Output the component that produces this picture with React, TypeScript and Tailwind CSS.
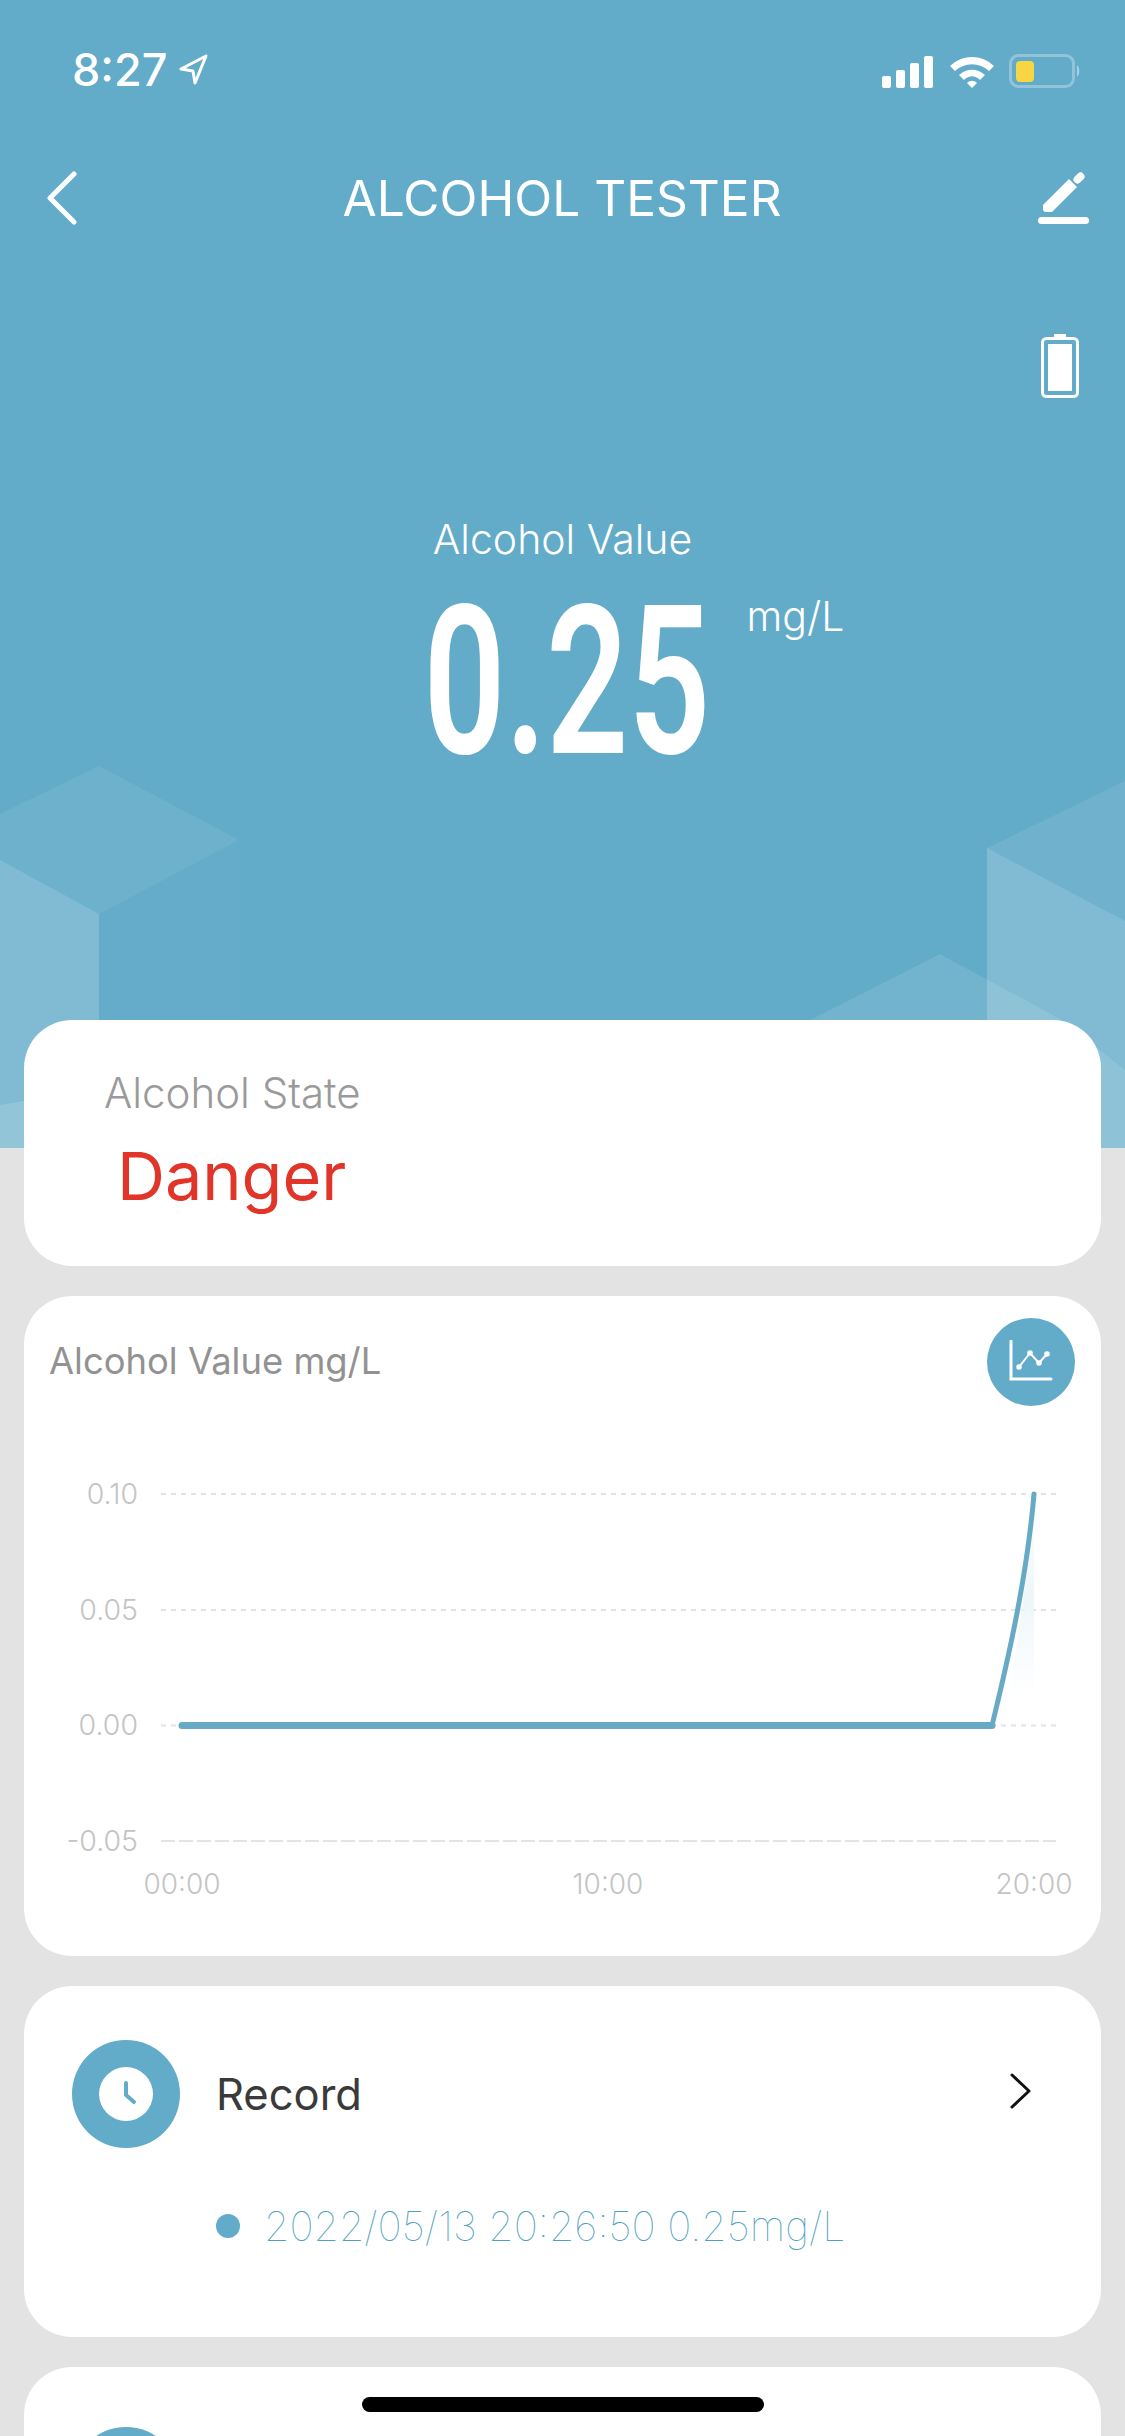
export default function App() {
  return (
    <div className="relative h-[2436px] w-[1125px] overflow-hidden bg-[#e3e3e3] font-['Inter','Noto_Sans',sans-serif]">
      <header className="relative h-[1148px] overflow-hidden bg-[#62abc9] text-white">
        <svg className="absolute inset-0" width="1125" height="1148" viewBox="0 0 1125 1148">
          <polygon points="0,814 99,766 239,840 99,914 0,860" fill="#fff" opacity="0.08" />
          <polygon points="0,860 99,914 99,1148 0,1148" fill="#fff" opacity="0.2" />
          <polygon points="99,914 239,840 239,1148 99,1148" fill="#fff" opacity="0.02" />
          <polygon points="1125,781 987,848 1125,921" fill="#fff" opacity="0.09" />
          <polygon points="987,848 1125,921 1125,1148 987,1148" fill="#fff" opacity="0.2" />
          <polygon points="810,1020 940,954 1062,1020 1125,1070 1125,1148 700,1148" fill="#fff" opacity="0.1" />
          <polygon points="0,1105 60,1095 60,1148 0,1148" fill="#fff" opacity="0.15" />
        </svg>

        <div className="relative flex h-[148px] items-end justify-between pr-[42px] pb-[58px] pl-[72px]">
          <div className="flex items-center gap-[11px] text-[45px] leading-[40px] font-medium">
            <span>8:27</span>
            <svg width="30" height="32" viewBox="0 0 30 32">
              <path d="M28 2 L3 15 L15 17 L17 29 Z" fill="none" stroke="#fff" strokeWidth="3" strokeLinejoin="round" />
            </svg>
          </div>
          <div className="flex items-center gap-[14px]">
            <svg width="54" height="33" viewBox="0 0 54 33">
              <rect x="1" y="20" width="9" height="12" rx="2" fill="#fff" />
              <rect x="15" y="14" width="9" height="18" rx="2" fill="#fff" />
              <rect x="29" y="7" width="9" height="25" rx="2" fill="#fff" />
              <rect x="43" y="0" width="9" height="32" rx="2" fill="#fff" />
            </svg>
            <svg width="46" height="34" viewBox="0 0 46 34">
              <path d="M1 11 C14 -1 32 -1 45 11 L40 16 C30 7 16 7 6 16 Z" fill="#fff" />
              <path d="M10 20 C18 13 28 13 36 20 L31 25 C26 20 20 20 15 25 Z" fill="#fff" />
              <path d="M18 28 C21 25 25 25 28 28 L23 33 Z" fill="#fff" />
            </svg>
            <svg width="74" height="36" viewBox="0 0 74 36">
              <rect x="1.5" y="1.5" width="63" height="31" rx="8" fill="none" stroke="#fff" strokeOpacity="0.3" strokeWidth="3" />
              <rect x="7" y="7" width="18" height="21" rx="4" fill="#f8d543" />
              <path d="M68 11 C71 13 71 21 68 23 Z" fill="#fff" fillOpacity="0.45" />
            </svg>
          </div>
        </div>

        <nav className="relative flex h-[100px] items-center justify-between pr-[35px] pl-[46px]">
          <svg width="32" height="54" viewBox="0 0 32 54">
            <path d="M28 3 L4 27 L28 51" fill="none" stroke="#fff" strokeWidth="5" strokeLinecap="round" strokeLinejoin="round" />
          </svg>
          <h1 className="ml-[8px] text-[49.6px] leading-[56px] font-normal">ALCOHOL TESTER</h1>
          <svg width="52" height="54" viewBox="0 -2 52 54">
            <rect x="0" y="44" width="51" height="7" rx="3.5" fill="#fff" />
            <path d="M5 32 L31 6 L39 14 L14 39 L8 39 Q5 39 5 36 Z" fill="#fff" />
            <path d="M39.5 6.5 L42.5 3.5" fill="none" stroke="#fff" strokeWidth="8" strokeLinecap="round" />
          </svg>
        </nav>

        <div className="relative mt-[86px] flex justify-end pr-[46px]">
          <svg width="38" height="64" viewBox="0 0 38 64">
            <rect x="13" y="0" width="12" height="6" rx="1" fill="#fff" />
            <rect x="1.5" y="4.5" width="35" height="58" rx="4" fill="none" stroke="#fff" strokeWidth="3" />
            <rect x="7" y="10" width="24" height="47" fill="#fff" />
          </svg>
        </div>

        <div className="relative mt-[118px] flex flex-col items-center">
          <p className="text-[41px] leading-[46px] font-light">Alcohol Value</p>
          <div className="relative mt-[35px] ml-[8px] flex h-[170px] w-[282px] items-center justify-center">
            <span className="scale-x-[0.69] font-['Roboto',sans-serif] text-[208px] leading-[170px] font-semibold">0.25</span>
            <span className="absolute top-[-4px] left-[321px] text-[41px] leading-[46px] font-light">mg/L</span>
          </div>
        </div>
      </header>

      <main className="relative -mt-[128px] flex flex-col gap-[30px] px-[24px]">
        <section className="flex h-[246px] flex-col rounded-[48px] bg-white pt-[50px] pl-[80px]">
          <p className="text-[42px] leading-[46px] font-light text-[#9a9a9a]">Alcohol State</p>
          <p className="mt-[20px] ml-[13px] text-[66.5px] leading-[80px] text-[#e2352a]">Danger</p>
        </section>

        <section className="relative h-[660px] rounded-[48px] bg-white">
          <div className="flex items-start justify-between pt-[22px] pr-[26px] pl-[25px]">
            <p className="mt-[22px] text-[36.4px] leading-[42px] text-[#929292]">Alcohol Value mg/L</p>
            <div className="flex h-[88px] w-[88px] items-center justify-center rounded-full bg-[#62abc9]">
              <svg width="44" height="44" viewBox="0 0 44 44">
                <path d="M2 1 V39 H42" fill="none" stroke="#fff" strokeWidth="3" strokeLinecap="round" />
                <path d="M10 27 L21 13 L30 23 L38 14" fill="none" stroke="#fff" strokeWidth="2" />
                <circle cx="10" cy="27" r="2.8" fill="#fff" />
                <circle cx="21" cy="13" r="2.8" fill="#fff" />
                <circle cx="30" cy="23" r="2.8" fill="#fff" />
                <circle cx="38" cy="14" r="2.8" fill="#fff" />
              </svg>
            </div>
          </div>
          <svg className="absolute top-0 left-0" width="1077" height="660" viewBox="0 0 1077 660" fontFamily="Inter, sans-serif" fill="#c4c4c4">
            <defs>
              <linearGradient id="area" x1="0" y1="0" x2="0" y2="1">
                <stop offset="0" stopColor="#f4f9fc" stopOpacity="0.3" />
                <stop offset="0.5" stopColor="#eef6fa" />
                <stop offset="1" stopColor="#eef6fa" stopOpacity="0" />
              </linearGradient>
            </defs>
            <g stroke="#e4e4e4" strokeWidth="2" strokeDasharray="5 5">
              <line x1="137" y1="198" x2="1032" y2="198" />
              <line x1="137" y1="314" x2="1032" y2="314" />
              <line x1="137" y1="429.5" x2="1032" y2="429.5" />
              <line x1="137" y1="545" x2="1032" y2="545" strokeDasharray="14 4" />
            </g>
            <path d="M1010 198 V400 H984 C996 340 1005 260 1010 198 Z" fill="url(#area)" stroke="none" />
            <path d="M968 429.5 C985 360 1003 280 1010 198" fill="none" stroke="#66aac6" strokeWidth="5" strokeLinecap="round" />
            <path d="M158 429.5 H968" fill="none" stroke="#66aac6" strokeWidth="7" strokeLinecap="round" />
            <g textAnchor="end" fontWeight="300" fontSize="28.5">
              <text x="114" y="208">0.10</text>
              <text x="114" y="324">0.05</text>
              <text x="114" y="439">0.00</text>
              <text x="114" y="555">-0.05</text>
            </g>
            <g textAnchor="middle" fontWeight="300" fontSize="28">
              <text x="158" y="598">00:00</text>
              <text x="584" y="598">10:00</text>
              <text x="1010" y="598">20:00</text>
            </g>
          </svg>
        </section>

        <section className="h-[351px] rounded-[48px] bg-white pt-[54px] pr-[69px] pl-[48px]">
          <div className="flex items-center">
            <div className="flex h-[108px] w-[108px] items-center justify-center rounded-full bg-[#62abc9]">
              <div className="flex h-[54px] w-[54px] items-center justify-center rounded-full bg-white">
                <svg width="54" height="54" viewBox="0 0 54 54">
                  <path d="M27 16 V28 L35 35" fill="none" stroke="#62abc9" strokeWidth="4" strokeLinecap="round" strokeLinejoin="round" />
                </svg>
              </div>
            </div>
            <p className="ml-[36px] text-[43.5px] leading-[54px] text-[#3a3a3a]">Record</p>
            <svg className="mt-[-6px] ml-auto" width="22" height="36" viewBox="0 0 22 36">
              <path d="M2 2 L19 18 L2 34" fill="none" stroke="#111" strokeWidth="3" strokeLinecap="round" strokeLinejoin="round" />
            </svg>
          </div>
          <div className="mt-[53px] ml-[144px] flex items-center gap-[24px]">
            <span className="h-[24px] w-[24px] rounded-full bg-[#62abc9]" />
            <p className="text-[40.9px] leading-[50px] font-thin whitespace-nowrap text-[#4f9fc0]">2022/05/13 20:26:50 0.25mg/L</p>
          </div>
        </section>

        <section className="h-[200px] rounded-[48px] bg-white pt-[60px] pl-[48px]">
          <div className="h-[108px] w-[108px] rounded-full bg-[#62abc9]" />
        </section>
      </main>

      <div className="absolute top-[2397px] left-[362px] h-[15px] w-[402px] rounded-full bg-black" />
    </div>
  );
}
